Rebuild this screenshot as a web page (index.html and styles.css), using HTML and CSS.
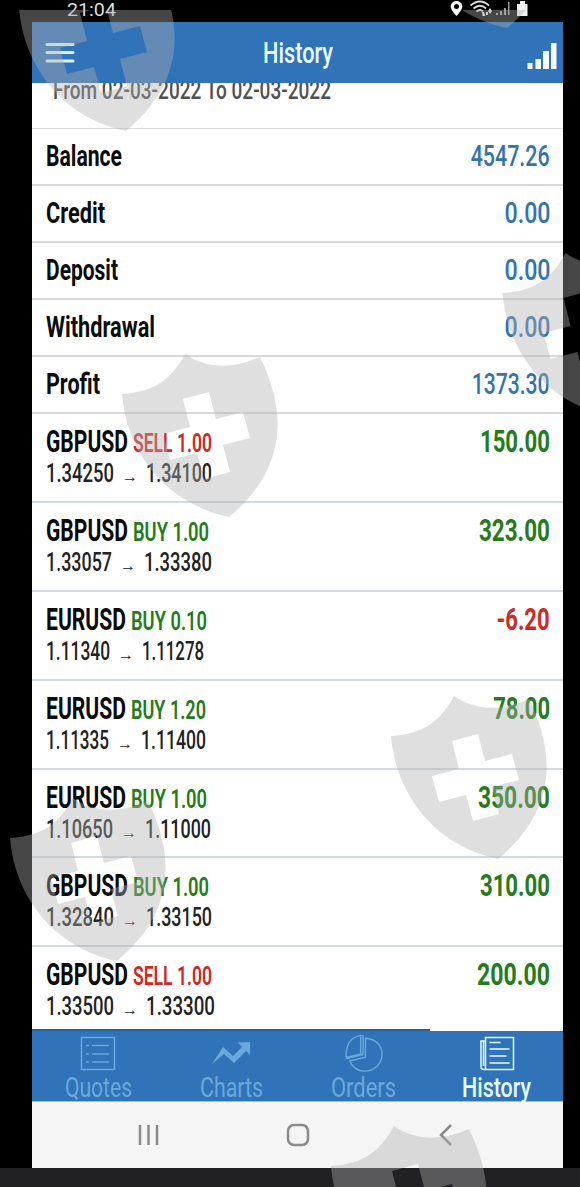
FILE: index.html
```html
<!DOCTYPE html>
<html lang="en">

<head>
	<meta charset="UTF-8">
	<meta name="viewport" content="width=device-width, initial-scale=1.0">
	<title>History</title>
	<link rel="stylesheet" href="styles.css">
</head>

<body>
	<div class="phone">
		<div class="status">
			<span class="time" data-w="49">21:04</span>
			<svg class="status-icons" width="82" height="18" viewBox="0 0 82 18">
				<path fill="#fff" fill-rule="evenodd" d="M7.500 1C4 1 1.700 3.500 1.700 6.500C1.700 10 7.500 16 7.500 16S13.300 10 13.300 6.500C13.300 3.500 11 1 7.500 1zM7.500 4a2.500 2.500 0 1 1 0 5a2.500 2.500 0 1 1 0-5z" />
				<g fill="none" stroke="#ddd" stroke-width="1.700">
					<path d="M21.500 5.500Q31 -2.500 40 5.500M24.500 8.500Q31 3 37 8.500M27.500 11.500Q31 8.500 34 11.500" />
				</g>
				<path fill="#ddd" d="M33 12h2l1.500 4h-3zM37 12h2v3h-2zM39 11l2-3l2 3l-2 3z" />
				<path fill="#999" d="M47 13h2v2h-2zM51 11h2v4h-2zM55 8h2v7h-2zM59 2h1.500v13H59z" />
				<path fill="#eee" d="M71 1h5v3h2.500v12H68V4h3z" />
			</svg>
		</div>

		<header class="header">
			<svg width="30" height="22" viewBox="0 0 30 22">
				<path d="M2 2.500h26M2 10.500h26M2 19h26" stroke="#d5f5f8" stroke-width="3" stroke-linecap="round" />
			</svg>
			<h1><span data-w="70">History</span></h1>
			<svg width="30" height="28" viewBox="0 0 30 28">
				<path fill="#f4fdff" d="M.5 21h5v6h-5zM8.500 17h5.500v10H8.500zM16 9h6v18h-6zM24 1h5.500v26H24z" />
			</svg>
		</header>

		<main>
			<div class="range"><span data-w="278">From 02-03-2022 To 02-03-2022</span></div>

			<div class="total"><b data-w="76">Balance</b><span class="right" data-w="79">4547.26</span></div>
			<div class="total"><b data-w="59">Credit</b><span class="right" data-w="46">0.00</span></div>
			<div class="total"><b data-w="72">Deposit</b><span class="right" data-w="46">0.00</span></div>
			<div class="total"><b data-w="109">Withdrawal</b><span class="right" data-w="46">0.00</span></div>
			<div class="total"><b data-w="54">Profit</b><span class="right" data-w="78">1373.30</span></div>

			<div class="deal">
				<div class="symbol"><b data-w="82">GBPUSD</b><i class="sell" data-w="79">SELL 1.00</i></div>
				<div class="amount up"><b class="right" data-w="70">150.00</b></div>
				<div class="price"><span data-w="68">1.34250</span><em>→</em><span data-w="66">1.34100</span></div>
			</div>
			<div class="deal">
				<div class="symbol"><b data-w="82">GBPUSD</b><i class="buy" data-w="76">BUY 1.00</i></div>
				<div class="amount up"><b class="right" data-w="71">323.00</b></div>
				<div class="price"><span data-w="66">1.33057</span><em>→</em><span data-w="68">1.33380</span></div>
			</div>
			<div class="deal">
				<div class="symbol"><b data-w="80">EURUSD</b><i class="buy" data-w="76">BUY 0.10</i></div>
				<div class="amount down"><b class="right" data-w="53">-6.20</b></div>
				<div class="price"><span data-w="64">1.11340</span><em>→</em><span data-w="62">1.11278</span></div>
			</div>
			<div class="deal">
				<div class="symbol"><b data-w="80">EURUSD</b><i class="buy" data-w="75">BUY 1.20</i></div>
				<div class="amount up"><b class="right" data-w="57">78.00</b></div>
				<div class="price"><span data-w="63">1.11335</span><em>→</em><span data-w="65">1.11400</span></div>
			</div>
			<div class="deal">
				<div class="symbol"><b data-w="80">EURUSD</b><i class="buy" data-w="76">BUY 1.00</i></div>
				<div class="amount up"><b class="right" data-w="72">350.00</b></div>
				<div class="price"><span data-w="67">1.10650</span><em>→</em><span data-w="66">1.11000</span></div>
			</div>
			<div class="deal">
				<div class="symbol"><b data-w="82">GBPUSD</b><i class="buy" data-w="76">BUY 1.00</i></div>
				<div class="amount up"><b class="right" data-w="70">310.00</b></div>
				<div class="price"><span data-w="68">1.32840</span><em>→</em><span data-w="66">1.33150</span></div>
			</div>
			<div class="deal">
				<div class="symbol"><b data-w="82">GBPUSD</b><i class="sell" data-w="79">SELL 1.00</i></div>
				<div class="amount up"><b class="right" data-w="73">200.00</b></div>
				<div class="price"><span data-w="68">1.33500</span><em>→</em><span data-w="69">1.33300</span></div>
			</div>
		</main>

		<nav class="tabs">
			<div class="tab">
				<svg width="40" height="40" viewBox="0 0 40 40">
					<path d="M3.500 4.500h33v32h-33zM14 12.500h17M14 21h17M14 29h17M8 12.500h3M8 21h3M8 29h3" />
				</svg>
				<span data-w="67">Quotes</span>
			</div>
			<div class="tab">
				<svg width="40" height="40" viewBox="0 0 40 40">
					<path class="solid" d="M1 31L12 14L22 23L31 14L27 9.500L39 9V22L35 18L23 30L13 21z" />
				</svg>
				<span data-w="63">Charts</span>
			</div>
			<div class="tab">
				<svg width="42" height="42" viewBox="0 0 42 42">
					<path d="M19.500 2.500C7 3 1 13 2.500 27L20 22.500V2.500M17.500 4v18L3 25.500M22.500 5.500C34 6 40 14 40 22C40 33 31 40 22 40C14 40 8 35 6 29.500L22.500 25.500z" />
				</svg>
				<span data-w="65">Orders</span>
			</div>
			<div class="tab active">
				<svg width="40" height="40" viewBox="0 0 40 40">
					<path d="M8.500 4.500h28v32h-28zM8 8H4v26q0 2.500 3 2.500h3M6.500 8v25M12.500 9.500h11M12.500 16h20M12.500 23h17M12.500 30h20" />
				</svg>
				<span data-w="69">History</span>
			</div>
		</nav>

		<div class="system">
			<svg width="24" height="24" viewBox="0 0 24 24"><path d="M3 2v20M11.500 2v20M20 2v20" /></svg>
			<svg width="24" height="24" viewBox="0 0 24 24"><rect x="2" y="2" width="20" height="20" rx="6" /></svg>
			<svg width="24" height="24" viewBox="0 0 24 24"><path d="M17 2L7 12L17 22" /></svg>
		</div>
	</div>

	<!-- watermark over everything -->
	<svg class="watermark" width="580" height="1177" viewBox="0 10 580 1177">
		<defs>
			<path id="shield" fill-rule="evenodd" d="M63 0C85 15 110 15 138 3C161 50 171 110 107 163C45 150 5 100 0 40C34 38 50 24 63 0zM61 45L68 73L41 80L48 106L75 99L82 125L108 118L101 91L128 84L121 58L94 65L87 38z" />
		</defs>
		<use href="#shield" x="19" y="-32" />
		<use href="#shield" x="400" y="-135" />
		<use href="#shield" x="502.500" y="253" />
		<use href="#shield" x="122" y="354" />
		<use href="#shield" x="391" y="696" />
		<use href="#shield" x="10" y="798" />
		<use href="#shield" x="331" y="1126" />
	</svg>

	<script>
		// squeeze every label to its own width
		document.querySelectorAll('[data-w]').forEach(el => {
			const natural = el.getBoundingClientRect().width
			const side = el.classList.contains('right') ? 'marginLeft' : 'marginRight'
			el.style.transform = `scaleX(${el.dataset.w / natural})`
			el.style[side] = `${el.dataset.w - natural}px`
		})
	</script>
</body>

</html>
```
FILE: styles.css
```css
body {
	margin: 0;
	height: 1187px;
	background: linear-gradient(#000 1168px, #212025 1168px);
	font-family: Roboto, "Liberation Sans", sans-serif;
	position: relative;
	overflow: hidden;
}

.phone {
	width: 531px;
	height: 1168px;
	margin-left: 32px;
	background: #fff;
	display: flex;
	flex-direction: column;
}

[data-w] {
	display: inline-block;
	white-space: nowrap;
	transform-origin: left;
}

.right {
	transform-origin: right;
}

.status {
	height: 22px;
	flex: none;
	background: #000;
	color: #ddd;
	display: flex;
	justify-content: space-between;
	padding: 0 32px 0 35px;
	font-size: 19px;
	line-height: 19px;
}

.header {
	height: 61px;
	flex: none;
	box-sizing: border-box;
	background: #3173b9;
	display: flex;
	align-items: center;
	justify-content: space-between;
	padding: 0 6px 0 13px;
}

.header svg:last-child {
	margin-top: 7px;
}

h1 {
	margin: 0 7px 0 0;
	color: #e9faff;
	font-size: 30px;
	font-weight: 500;
	line-height: 61px;
}

main {
	height: 946px;
	overflow: hidden;
}

.range {
	height: 45px;
	padding-left: 21px;
	border-bottom: 1px solid #dcdcdc;
	color: #505050;
	font-size: 25px;
	font-weight: 500;
	line-height: 15px;
}

.total {
	height: 57.1px;
	box-sizing: border-box;
	border-bottom: 2px solid #d6dadd;
	padding: 0 13px 0 14px;
	display: flex;
	justify-content: space-between;
	font-size: 30px;
	line-height: 54px;
	color: #0c0c0c;
}

.total span {
	color: #3473ad;
	font-weight: 500;
}

.deal {
	height: 88.8px;
	box-sizing: border-box;
	border-bottom: 2px solid #d3dbe2;
	padding: 10px 13px 0 14px;
	display: grid;
	grid-template-columns: 1fr auto;
	grid-template-rows: 36px 28px;
	font-size: 31px;
	line-height: 36px;
	color: #0a0a0a;
}

.deal:last-child {
	border: none;
}

.symbol i {
	margin-left: 5px;
	font-style: normal;
	font-weight: 600;
	font-size: 26px;
}

.buy, .up {
	color: #237c19;
}

.sell, .down {
	color: #cd2a27;
}

.price {
	font-size: 25px;
	font-weight: 500;
	line-height: 28px;
	color: #222;
}

.price em {
	display: inline-block;
	width: 32px;
	text-align: center;
	font: 16px/20px "Liberation Serif", serif;
}

.tabs {
	flex: none;
	height: 73px;
	background: #3173b9;
	display: grid;
	grid-template-columns: repeat(4, 1fr);
	position: relative;
	border-bottom: 1px solid #8fc4ec;
	box-sizing: border-box;
}

.tabs::before {
	content: "";
	position: absolute;
	top: 0;
	left: 0;
	width: 398px;
	height: 2px;
	background: #25619f;
}

.tabs::after {
	content: "";
	position: absolute;
	top: 0;
	left: 398px;
	right: 0;
	height: 2px;
	background: #fff;
}

.tab {
	display: flex;
	flex-direction: column;
	align-items: center;
	padding-top: 4px;
	color: #69a9dc;
	font-size: 28px;
	line-height: 29px;
}

.tab svg {
	flex: none;
	height: 40px;
	fill: none;
	stroke: currentColor;
	stroke-width: 1.5;
}

.tab .solid {
	fill: currentColor;
	stroke: none;
}

.tab.active {
	color: #e4fbff;
	font-weight: 500;
}

.system {
	flex: 1;
	background: #f5f5f5;
	display: flex;
	justify-content: space-between;
	align-items: center;
	padding: 0 105px;
}

.system svg {
	fill: none;
	stroke: #8a8a8a;
	stroke-width: 2.5;
}

.watermark {
	position: absolute;
	top: 10px;
	left: 0;
	fill: rgba(175, 175, 175, .4);
}
```
